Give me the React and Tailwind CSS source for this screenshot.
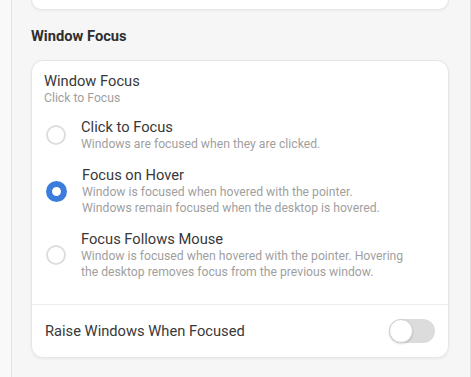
import React from "react";

const items = [
  { title: "Click to Focus", desc: ["Windows are focused when they are clicked."], checked: false },
  {
    title: "Focus on Hover",
    desc: ["Window is focused when hovered with the pointer.", "Windows remain focused when the desktop is hovered."],
    checked: true,
  },
  {
    title: "Focus Follows Mouse",
    desc: ["Window is focused when hovered with the pointer. Hovering", "the desktop removes focus from the previous window."],
    checked: false,
  },
];

function Radio({ checked }) {
  return checked ? (
    <div className="h-[21px] w-[21px] shrink-0 rounded-full border-[6px] border-[#3b7ddc] bg-white" />
  ) : (
    <div className="h-[20px] w-[20px] shrink-0 rounded-full border-2 border-[#dedede] bg-white" />
  );
}

export default function App() {
  return (
    <div
      className="flex h-[377px] w-[471px] overflow-hidden bg-[#f6f6f6]"
      style={{ fontFamily: "Roboto, 'Noto Sans', sans-serif" }}
    >
      <div className="w-[12px] shrink-0 border-r border-[#e3e3e3] bg-[#f9f9f9]" />
      <div className="flex w-[456px] shrink-0 flex-col px-[19px]">
        <div className="h-[10px] rounded-b-[12px] border-x border-b border-[#e6e6e6] bg-white shadow-[0_1px_2px_rgba(0,0,0,0.05)]" />
        <div className="mt-[16px] text-[14.7px] font-bold leading-[20px] text-[#2e2e2e]">Window Focus</div>
        <div className="mt-[14px] flex h-[298px] flex-col rounded-[12px] border border-[#e6e6e6] bg-white shadow-[0_1px_3px_rgba(0,0,0,0.06)]">
          <div className="px-[11px] pt-[11px]">
            <div className="pl-px text-[14.7px] leading-[18px] text-[#383838]">Window Focus</div>
            <div className="pl-px text-[12.2px] leading-[16px] text-[#9f9f9f]">Click to Focus</div>
          </div>
          <div className="flex flex-col gap-[14px] pt-[12px] pb-[24px]">
            {items.map((it) => (
              <div key={it.title} className="flex items-center gap-[15px] pl-[14px]">
                <Radio checked={it.checked} />
                <div className="flex flex-col">
                  <div className="text-[14.7px] leading-[18px] text-[#383838]">{it.title}</div>
                  {it.desc.map((d) => (
                    <div key={d} className="text-[12.2px] leading-[16px] text-[#9f9f9f]">
                      {d}
                    </div>
                  ))}
                </div>
              </div>
            ))}
          </div>
          <div className="flex flex-1 items-center justify-between border-t border-[#ececec] pl-[13px] pr-[13px]">
            <span className="text-[14.7px] leading-[18px] text-[#383838]">Raise Windows When Focused</span>
            <div className="flex h-[24px] w-[46px] items-center rounded-full bg-[#dcdcdc]">
              <div className="h-[24px] w-[24px] rounded-full border border-[#d0d0d0] bg-white shadow-[0_1px_2px_rgba(0,0,0,0.15)]" />
            </div>
          </div>
        </div>
      </div>
      <div className="flex-1 border-r border-[#dedede] bg-[#f6f6f6]" />
    </div>
  );
}
